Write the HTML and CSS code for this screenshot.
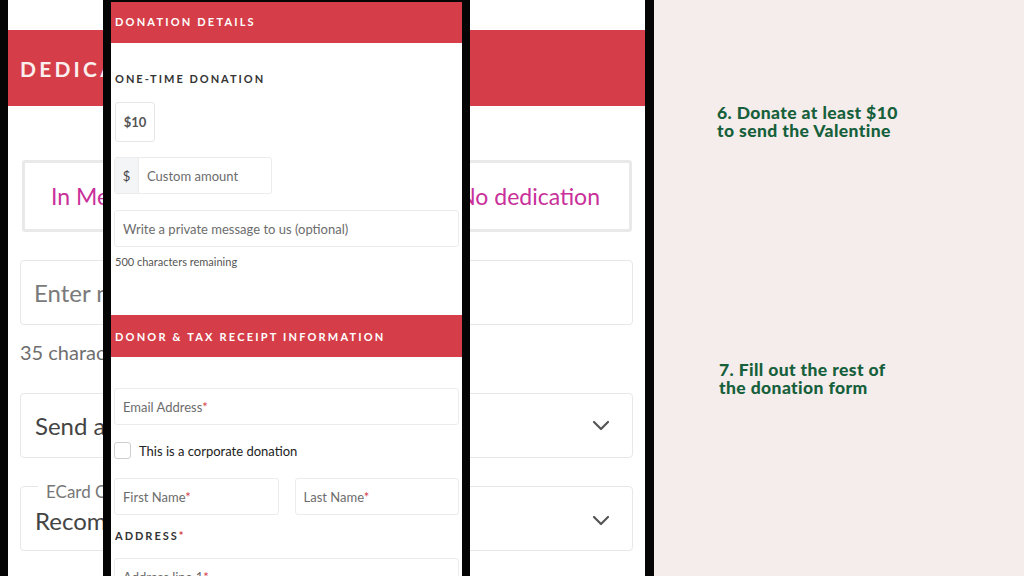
FILE: index.html
```html
<!DOCTYPE html>
<html lang="en">
<head>
<meta charset="utf-8">
<title>Valentine donation steps</title>
<link rel="stylesheet" href="styles.css">
</head>
<body>
<div class="stage">
  <div class="edge edge-left"></div>
  <section class="bgphone">
    <div class="bg-top"></div>
    <div class="bg-band"><span class="bg-band-title">DEDICATE YOUR GIFT</span></div>
    <div class="bg-body">
      <div class="dedication">
        <span class="ded-opt">In Memory of</span>
        <span class="ded-opt">No dedication</span>
      </div>
      <div class="big-input"><span class="big-ph">Enter name of recipient</span></div>
      <div class="big-note">35 characters remaining</div>
      <div class="big-select">
        <span class="big-val">Send an ECard</span>
        <svg class="chev" width="18" height="11" viewBox="0 0 18 11"><path d="M2 2l7 7 7-7" fill="none" stroke="#555" stroke-width="2.2" stroke-linecap="round" stroke-linejoin="round"/></svg>
      </div>
      <div class="big-select big-select-label">
        <span class="float-label">ECard Category</span>
        <span class="big-val">Recommended</span>
        <svg class="chev" width="18" height="11" viewBox="0 0 18 11"><path d="M2 2l7 7 7-7" fill="none" stroke="#555" stroke-width="2.2" stroke-linecap="round" stroke-linejoin="round"/></svg>
      </div>
    </div>
  </section>
  <div class="edge edge-mid"></div>
  <aside class="notes">
    <p class="note note-six">6. Donate at least $10<br>to send the Valentine</p>
    <p class="note note-seven">7. Fill out the rest of<br>the donation form</p>
  </aside>

  <section class="phone">
    <div class="phone-screen">
      <div class="sec-head sec-head-first">DONATION DETAILS</div>
      <div class="form-label label-onetime">ONE-TIME DONATION</div>
      <div class="amount-btn">$10</div>
      <div class="custom-group">
        <span class="addon">$</span>
        <span class="ph">Custom amount</span>
      </div>
      <div class="field field-msg"><span class="ph">Write a private message to us (optional)</span></div>
      <div class="small-note">500 characters remaining</div>
      <div class="sec-head sec-head-donor">DONOR &amp; TAX RECEIPT INFORMATION</div>
      <div class="field field-email"><span class="ph">Email Address<span class="req">*</span></span></div>
      <label class="check-row"><span class="checkbox"></span><span class="check-text">This is a corporate donation</span></label>
      <div class="name-row">
        <div class="field"><span class="ph">First Name<span class="req">*</span></span></div>
        <div class="field"><span class="ph">Last Name<span class="req">*</span></span></div>
      </div>
      <div class="form-label label-address">ADDRESS<span class="req">*</span></div>
      <div class="field field-addr"><span class="ph">Address line 1<span class="req">*</span></span></div>
    </div>
  </section>
</div>
</body>
</html>
```
FILE: styles.css
```css
* { box-sizing: border-box; }
html, body { margin: 0; padding: 0; }
body {
  width: 1024px;
  height: 576px;
  overflow: hidden;
  font-family: "Lato", "Liberation Sans", sans-serif;
  background: #f5edec;
}
.stage {
  position: relative;
  display: flex;
  width: 1024px;
  height: 576px;
  overflow: hidden;
}
.edge { background: #050505; flex: none; }
.edge-left { width: 8px; }
.edge-mid { width: 9px; }

/* background phone */
.bgphone {
  width: 637px;
  flex: none;
  background: #ffffff;
  display: flex;
  flex-direction: column;
}
.bgphone > *, .bg-body > * { flex: none; }
.bg-top { height: 30px; }
.bg-band {
  height: 76px;
  background: #d53e48;
  display: flex;
  align-items: center;
  padding-left: 12px;
}
.bg-band-title {
  color: #fbeeee;
  font-weight: 700;
  font-size: 21px;
  letter-spacing: 3.2px;
  white-space: nowrap;
}
.bg-body {
  padding: 54px 12px 0 12px;
  display: flex;
  flex-direction: column;
}
.dedication {
  margin: 0 1px 0 2px;
  height: 72px;
  border: 3px solid #e9e9e9;
  border-radius: 3px;
  display: flex;
  align-items: center;
  justify-content: space-between;
  padding: 0 29px 0 26px;
}
.ded-opt {
  color: #c9309a;
  font-size: 23px;
}
.big-input {
  margin-top: 28px;
  height: 65px;
  border: 1px solid #e7e7e7;
  border-radius: 4px;
  display: flex;
  align-items: center;
  padding-left: 13px;
}
.big-ph { color: #7a7a7a; font-size: 24px; }
.big-note {
  margin-top: 15px;
  font-size: 20px;
  color: #6f6f6f;
  line-height: 24px;
}
.big-select {
  position: relative;
  margin-top: 29px;
  height: 65px;
  border: 1px solid #e7e7e7;
  border-radius: 4px;
  display: flex;
  align-items: center;
  justify-content: space-between;
  padding: 0 22px 0 14px;
}
.big-val { color: #444; font-size: 24px; }
.big-select-label { margin-top: 28px; padding-top: 4px; }
.float-label {
  position: absolute;
  left: 17px;
  top: -4px;
  background: #fff;
  padding: 0 8px;
  font-size: 17px;
  color: #777;
  line-height: 18px;
}
.chev { display: block; }

/* notes panel */
.notes {
  flex: 1;
  padding: 104px 0 0 63px;
  display: flex;
  flex-direction: column;
}
.note {
  margin: 0;
  color: #16603b;
  font-weight: 900;
  font-size: 17.5px;
  line-height: 18px;
  letter-spacing: 0.4px;
}
.note-seven { margin-top: 221px; margin-left: 2px; }

/* overlay phone */
.phone {
  position: absolute;
  left: 103px;
  top: 0;
  width: 367px;
  height: 576px;
  background: #050505;
  padding: 2px 8px 0 8px;
}
.phone-screen {
  height: 100%;
  background: #ffffff;
  display: flex;
  flex-direction: column;
  padding: 0 3px;
  overflow: hidden;
}
.phone-screen > * { flex: none; }
.sec-head {
  margin: 0 -3px;
  background: #d53e48;
  color: #ffffff;
  font-weight: 700;
  font-size: 11px;
  letter-spacing: 2.2px;
  display: flex;
  align-items: center;
  padding-left: 4px;
}
.sec-head-first { height: 41px; padding-bottom: 2px; }
.sec-head-donor { height: 42px; margin-top: 46px; }
.form-label {
  color: #333333;
  font-weight: 700;
  font-size: 11px;
  letter-spacing: 2px;
  line-height: 14px;
  padding-left: 1px;
}
.label-onetime { margin-top: 29px; }
.label-address { margin-top: 14px; }
.amount-btn {
  margin: 16px 0 0 1px;
  width: 40px;
  height: 40px;
  border: 1px solid #e6e6e6;
  border-radius: 3px;
  display: flex;
  align-items: center;
  justify-content: center;
  font-size: 13px;
  color: #555;
  font-weight: 700;
}
.custom-group {
  margin-top: 15px;
  width: 158px;
  height: 37px;
  border: 1px solid #ececec;
  border-radius: 3px;
  display: flex;
  align-items: center;
}
.addon {
  width: 24px;
  align-self: stretch;
  background: #f4f5f7;
  border-right: 1px solid #ececec;
  display: flex;
  align-items: center;
  justify-content: center;
  font-size: 13px;
  color: #444;
}
.custom-group .ph { padding-left: 8px; }
.ph { font-size: 13px; color: #6c6c6c; }
.req { color: #d53e48; }
.field {
  height: 37px;
  border: 1px solid #ececec;
  border-radius: 3px;
  display: flex;
  align-items: center;
  padding-left: 8px;
}
.field-msg { margin-top: 16px; }
.small-note {
  margin-top: 8px;
  font-size: 11px;
  color: #555;
  line-height: 14px;
  padding-left: 1px;
}
.field-email { margin-top: 31px; }
.check-row {
  margin-top: 17px;
  display: flex;
  align-items: center;
  gap: 8px;
  height: 17px;
}
.checkbox {
  width: 17px;
  height: 17px;
  border: 1px solid #cfcfcf;
  border-radius: 3px;
  background: #fff;
  flex: none;
}
.check-text { font-size: 13px; color: #222; }
.name-row {
  margin-top: 19px;
  display: grid;
  grid-template-columns: 1fr 1fr;
  gap: 16px;
}
.field-addr { margin-top: 15px; }
```
